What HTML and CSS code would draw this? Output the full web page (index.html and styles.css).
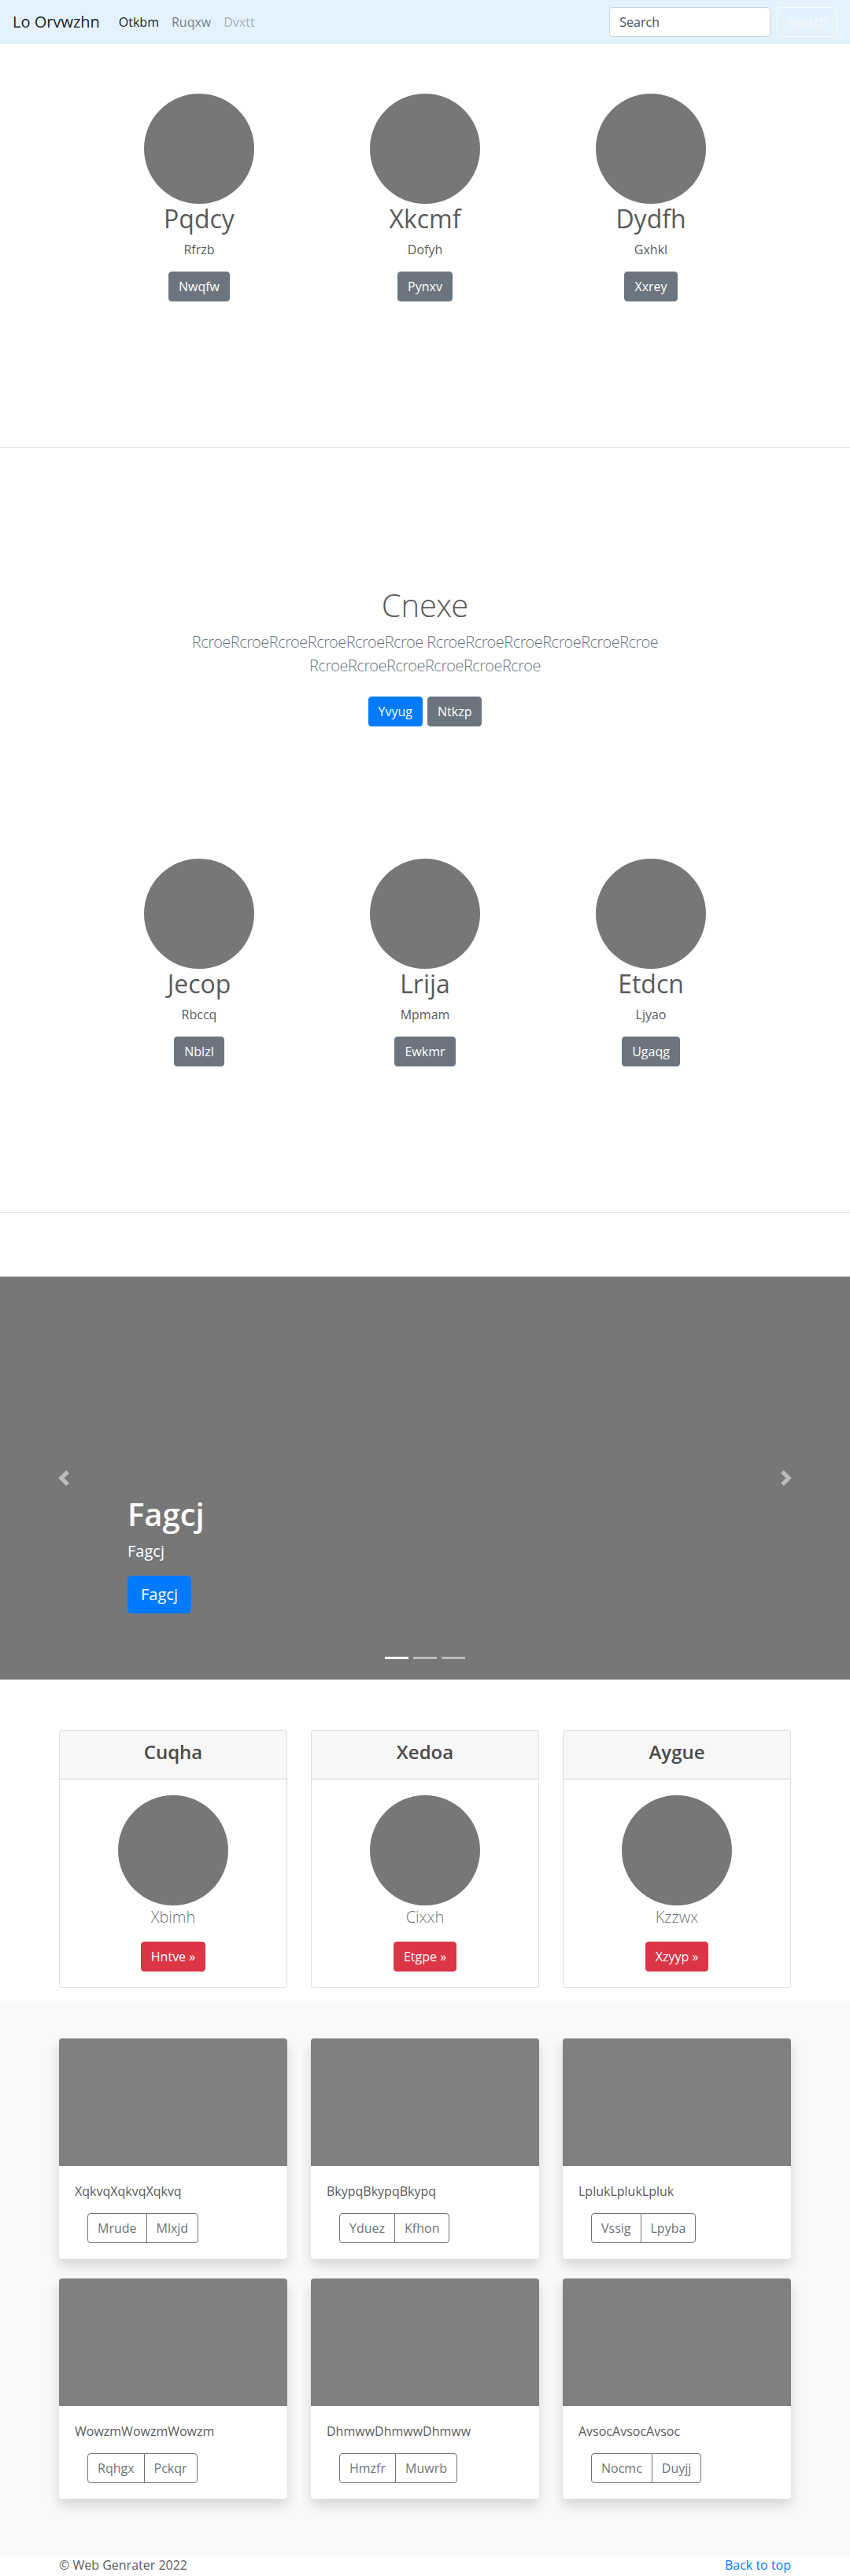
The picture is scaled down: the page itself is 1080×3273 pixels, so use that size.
FILE: index.html
```html
<!DOCTYPE html>
<html lang="en">
<head>
<meta charset="utf-8">
<title>Lo Orvwzhn</title>
<link rel="stylesheet" href="styles.css">
</head>
<body>
<nav class="navbar">
  <a class="brand" href="#">Lo Orvwzhn</a>
  <ul class="nav-links">
    <li><a class="nav-link active" href="#">Otkbm</a></li>
    <li><a class="nav-link" href="#">Ruqxw</a></li>
    <li><a class="nav-link disabled" href="#">Dvxtt</a></li>
  </ul>
  <form class="search-form">
    <input class="search-input" type="search" placeholder="Search">
    <button class="btn btn-outline-light" type="button">Search</button>
  </form>
</nav>

<section class="marketing">
  <div class="marketing-row">
    <div class="feature">
      <div class="avatar"></div>
      <h2 class="feature-title">Pqdcy</h2>
      <p class="feature-text">Rfrzb</p>
      <a class="btn btn-secondary" href="#">Nwqfw</a>
    </div>
    <div class="feature">
      <div class="avatar"></div>
      <h2 class="feature-title">Xkcmf</h2>
      <p class="feature-text">Dofyh</p>
      <a class="btn btn-secondary" href="#">Pynxv</a>
    </div>
    <div class="feature">
      <div class="avatar"></div>
      <h2 class="feature-title">Dydfh</h2>
      <p class="feature-text">Gxhkl</p>
      <a class="btn btn-secondary" href="#">Xxrey</a>
    </div>
  </div>
</section>

<section class="jumbotron">
  <div class="jumbotron-inner">
    <h1 class="jumbotron-heading">Cnexe</h1>
    <p class="lead">RcroeRcroeRcroeRcroeRcroeRcroe RcroeRcroeRcroeRcroeRcroeRcroe RcroeRcroeRcroeRcroeRcroeRcroe</p>
    <div class="jumbotron-actions">
      <a class="btn btn-primary" href="#">Yvyug</a>
      <a class="btn btn-secondary" href="#">Ntkzp</a>
    </div>
  </div>
</section>

<section class="marketing">
  <div class="marketing-row">
    <div class="feature">
      <div class="avatar"></div>
      <h2 class="feature-title">Jecop</h2>
      <p class="feature-text">Rbccq</p>
      <a class="btn btn-secondary" href="#">Nblzl</a>
    </div>
    <div class="feature">
      <div class="avatar"></div>
      <h2 class="feature-title">Lrija</h2>
      <p class="feature-text">Mpmam</p>
      <a class="btn btn-secondary" href="#">Ewkmr</a>
    </div>
    <div class="feature">
      <div class="avatar"></div>
      <h2 class="feature-title">Etdcn</h2>
      <p class="feature-text">Ljyao</p>
      <a class="btn btn-secondary" href="#">Ugaqg</a>
    </div>
  </div>
</section>

<div class="carousel">
  <ol class="carousel-indicators">
    <li class="active"></li>
    <li></li>
    <li></li>
  </ol>
  <div class="carousel-caption">
    <h1 class="caption-title">Fagcj</h1>
    <p class="caption-text">Fagcj</p>
    <p class="caption-action"><a class="btn btn-lg btn-primary" href="#">Fagcj</a></p>
  </div>
  <a class="carousel-control prev" href="#">
    <svg class="control-icon" viewBox="0 0 8 8" fill="#fff"><path d="M5.25 0l-4 4 4 4 1.5-1.5L4.25 4l2.5-2.5L5.25 0z"/></svg>
  </a>
  <a class="carousel-control next" href="#">
    <svg class="control-icon" viewBox="0 0 8 8" fill="#fff"><path d="M2.75 0l-1.5 1.5L3.750 4l-2.5 2.5L2.75 8l4-4-4-4z"/></svg>
  </a>
</div>

<section class="container">
  <div class="card-deck">
    <div class="card">
      <div class="card-header"><h4>Cuqha</h4></div>
      <div class="card-body">
        <div class="avatar"></div>
        <p class="card-sub">Xbimh</p>
        <a class="btn btn-danger" href="#">Hntve &raquo;</a>
      </div>
    </div>
    <div class="card">
      <div class="card-header"><h4>Xedoa</h4></div>
      <div class="card-body">
        <div class="avatar"></div>
        <p class="card-sub">Cixxh</p>
        <a class="btn btn-danger" href="#">Etgpe &raquo;</a>
      </div>
    </div>
    <div class="card">
      <div class="card-header"><h4>Aygue</h4></div>
      <div class="card-body">
        <div class="avatar"></div>
        <p class="card-sub">Kzzwx</p>
        <a class="btn btn-danger" href="#">Xzyyp &raquo;</a>
      </div>
    </div>
  </div>
</section>

<section class="album">
  <div class="container album-grid">
    <div class="album-card">
      <div class="album-img"></div>
      <div class="album-body">
        <p class="album-text">XqkvqXqkvqXqkvq</p>
        <div class="btn-group"><a class="btn btn-outline-secondary" href="#">Mrude</a><a class="btn btn-outline-secondary" href="#">Mlxjd</a></div>
      </div>
    </div>
    <div class="album-card">
      <div class="album-img"></div>
      <div class="album-body">
        <p class="album-text">BkypqBkypqBkypq</p>
        <div class="btn-group"><a class="btn btn-outline-secondary" href="#">Yduez</a><a class="btn btn-outline-secondary" href="#">Kfhon</a></div>
      </div>
    </div>
    <div class="album-card">
      <div class="album-img"></div>
      <div class="album-body">
        <p class="album-text">LplukLplukLpluk</p>
        <div class="btn-group"><a class="btn btn-outline-secondary" href="#">Vssig</a><a class="btn btn-outline-secondary" href="#">Lpyba</a></div>
      </div>
    </div>
    <div class="album-card">
      <div class="album-img"></div>
      <div class="album-body">
        <p class="album-text">WowzmWowzmWowzm</p>
        <div class="btn-group"><a class="btn btn-outline-secondary" href="#">Rqhgx</a><a class="btn btn-outline-secondary" href="#">Pckqr</a></div>
      </div>
    </div>
    <div class="album-card">
      <div class="album-img"></div>
      <div class="album-body">
        <p class="album-text">DhmwwDhmwwDhmww</p>
        <div class="btn-group"><a class="btn btn-outline-secondary" href="#">Hmzfr</a><a class="btn btn-outline-secondary" href="#">Muwrb</a></div>
      </div>
    </div>
    <div class="album-card">
      <div class="album-img"></div>
      <div class="album-body">
        <p class="album-text">AvsocAvsocAvsoc</p>
        <div class="btn-group"><a class="btn btn-outline-secondary" href="#">Nocmc</a><a class="btn btn-outline-secondary" href="#">Duyjj</a></div>
      </div>
    </div>
  </div>
</section>

<footer class="footer">
  <p>&copy; Web Genrater 2022</p>
  <p><a href="#">Back to top</a></p>
</footer>
</body>
</html>
```

FILE: styles.css
```css
* { box-sizing: border-box; }
html, body { margin: 0; padding: 0; }
body {
  font-family: "Open Sans", "Noto Sans", sans-serif;
  font-size: 16px;
  line-height: 1.5;
  color: #5a5a5a;
  background: #fff;
}
a { text-decoration: none; }

/* navbar */
.navbar {
  display: flex;
  align-items: center;
  height: 56px;
  padding: 8px 16px;
  background: #e3f2fd;
}
.brand {
  font-size: 20px;
  line-height: 30px;
  padding: 5px 0;
  margin-right: 16px;
  color: rgba(0,0,0,.9);
}
.nav-links {
  display: flex;
  list-style: none;
  margin: 0;
  padding: 0;
  flex: 1;
}
.nav-link { display: block; padding: 8px; color: rgba(0,0,0,.5); }
.nav-link.active { color: rgba(0,0,0,.9); }
.nav-link.disabled { color: rgba(0,0,0,.3); }
.search-form { display: flex; align-items: center; }
.search-input {
  width: 205px;
  height: 38px;
  margin-right: 8px;
  padding: 6px 12px;
  font-family: inherit;
  font-size: 16px;
  color: #495057;
  background: #fff;
  border: 1px solid #ced4da;
  border-radius: 4px;
}
.search-input::placeholder { color: #495057; opacity: 1; }

/* buttons */
.btn {
  display: inline-block;
  font-family: inherit;
  font-size: 16px;
  line-height: 24px;
  padding: 6px 12px;
  border: 1px solid transparent;
  border-radius: 4px;
  color: #fff;
  background: transparent;
  text-align: center;
  white-space: nowrap;
}
.btn-outline-light { color: #f8f9fa; border-color: #f8f9fa; }
.btn-secondary { background: #6c757d; border-color: #6c757d; color: #fff; }
.btn-primary { background: #007bff; border-color: #007bff; color: #fff; }
.btn-danger { background: #dc3545; border-color: #dc3545; color: #fff; }
.btn-outline-secondary { color: #6c757d; border-color: #6c757d; }
.btn-lg { font-size: 20px; line-height: 30px; padding: 8px 16px; border-radius: 5px; }

/* light text */
.light {
  font-family: "Open Sans Light", "Lato Light", "Roboto Light", "Open Sans", sans-serif;
}

/* marketing rows */
.marketing {
  padding: 63px 0 185px;
  border-bottom: 1px solid #e5e5e5;
}
.marketing-row {
  display: grid;
  grid-template-columns: repeat(3, 287px);
  justify-content: center;
}
.feature {
  display: flex;
  flex-direction: column;
  align-items: center;
  text-align: center;
}
.avatar {
  width: 140px;
  height: 140px;
  border-radius: 50%;
  background: #777;
}
.feature-title {
  font-size: 32px;
  line-height: 38px;
  font-weight: 400;
  margin: 0 0 8px;
}
.feature-text { margin: 0 0 16px; }

/* jumbotron */
.jumbotron {
  padding: 176px 15px 97px;
  text-align: center;
}
.jumbotron-inner { max-width: 640px; margin: 0 auto; }
.jumbotron-heading {
  font-family: "Open Sans Light", "Lato Light", "Roboto Light", "Open Sans", sans-serif;
  font-size: 40px;
  line-height: 48px;
  font-weight: 300;
  margin: 0 0 8px;
}
.lead {
  font-family: "Open Sans Light", "Lato Light", "Roboto Light", "Open Sans", sans-serif;
  font-size: 20px;
  line-height: 30px;
  font-weight: 300;
  letter-spacing: -0.5px;
  color: #6c757d;
  margin: 0 0 16px;
}
.jumbotron-actions {
  display: flex;
  justify-content: center;
  gap: 6px;
  padding: 8px 0;
}

/* carousel */
.carousel {
  position: relative;
  height: 512px;
  margin: 81px 0 64px;
  background: #777;
  overflow: hidden;
}
.carousel-caption {
  position: absolute;
  left: 15%;
  right: 15%;
  bottom: 48px;
  padding: 20px 0;
  color: #fff;
  text-align: left;
}
.caption-title {
  font-size: 40px;
  line-height: 48px;
  font-weight: 600;
  margin: 0 0 8px;
}
.caption-text {
  font-size: 20px;
  line-height: 30px;
  margin: 0 0 16px;
}
.caption-action { margin: 0 0 16px; }
.carousel-control {
  position: absolute;
  top: 0;
  bottom: 0;
  width: 15%;
  display: flex;
  align-items: center;
  justify-content: center;
  opacity: .5;
}
.carousel-control.prev { left: 0; }
.carousel-control.next { right: 0; }
.control-icon { width: 20px; height: 20px; }
.carousel-indicators {
  position: absolute;
  left: 0;
  right: 0;
  bottom: 0;
  display: flex;
  justify-content: center;
  list-style: none;
  margin: 0 0 16px;
  padding: 0;
}
.carousel-indicators li {
  width: 30px;
  height: 23px;
  margin: 0 3px;
  border-top: 10px solid transparent;
  border-bottom: 10px solid transparent;
  background: #fff;
  background-clip: padding-box;
  opacity: .5;
}
.carousel-indicators li.active { opacity: 1; }

/* pricing cards */
.container {
  width: 960px;
  margin: 0 auto;
  padding: 0 15px;
}
.card-deck {
  display: grid;
  grid-template-columns: repeat(3, 1fr);
  gap: 30px;
  margin-bottom: 16px;
}
.card {
  background: #fff;
  border: 1px solid rgba(0,0,0,.125);
  border-radius: 4px;
  text-align: center;
  overflow: hidden;
}
.card-header {
  padding: 12px 20px;
  background: rgba(0,0,0,.03);
  border-bottom: 1px solid rgba(0,0,0,.125);
}
.card-header h4 {
  font-size: 24px;
  line-height: 29px;
  font-weight: 600;
  color: #4a4a4a;
  margin: 0 0 8px;
}
.card-body { padding: 20px; }
.card-body .avatar { margin: 0 auto; }
.card-sub {
  font-family: "Open Sans Light", "Lato Light", "Roboto Light", "Open Sans", sans-serif;
  font-size: 20px;
  line-height: 30px;
  font-weight: 300;
  color: #6c757d;
  margin: 0 0 16px;
}

/* album */
.album {
  background: #f8f9fa;
  padding: 48px 0 72px;
}
.album-grid {
  display: grid;
  grid-template-columns: repeat(3, 1fr);
  column-gap: 30px;
  row-gap: 25px;
}
.album-card {
  background: #fff;
  border-radius: 4px;
  box-shadow: 0 8px 16px rgba(0,0,0,.15);
  overflow: hidden;
}
.album-img { height: 162px; background: #808080; }
.album-body { padding: 20px; }
.album-text { margin: 0 0 16px; }
.btn-group { display: inline-flex; margin-left: 16px; }
.btn-group .btn { border-radius: 0; }
.btn-group .btn:first-child { border-radius: 4px 0 0 4px; }
.btn-group .btn:last-child { border-radius: 0 4px 4px 0; margin-left: -1px; }

/* footer */
.footer {
  width: 960px;
  margin: 0 auto;
  padding: 0 15px;
  display: flex;
  justify-content: space-between;
}
.footer p { margin: 0 0 16px; }
.footer a { color: #007bff; }
```
